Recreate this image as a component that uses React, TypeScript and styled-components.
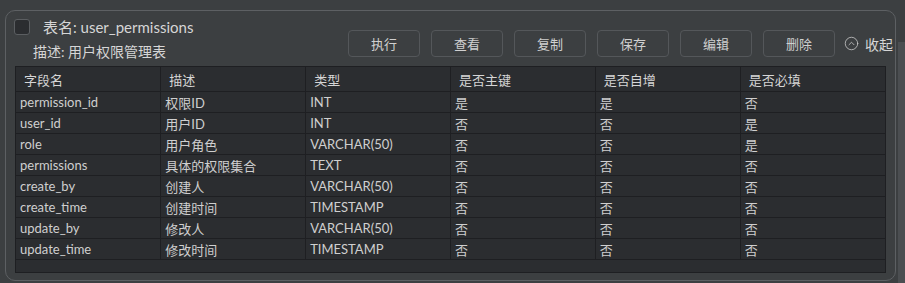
import styled, { createGlobalStyle } from 'styled-components';
import { CircleChevronUp } from 'lucide-react';

const GlobalStyle = createGlobalStyle`
  html, body {
    margin: 0;
    padding: 0;
    background: #3c3f41;
    font-family: Lato, "Noto Sans CJK SC", sans-serif;
    color: #d0d0d0;
  }
`;

type Field = {
  name: string;
  desc: string;
  type: string;
  pk: boolean;
  auto: boolean;
  required: boolean;
};

const FIELDS: Field[] = [
  { name: 'permission_id', desc: '权限ID', type: 'INT', pk: true, auto: true, required: false },
  { name: 'user_id', desc: '用户ID', type: 'INT', pk: false, auto: false, required: true },
  { name: 'role', desc: '用户角色', type: 'VARCHAR(50)', pk: false, auto: false, required: true },
  { name: 'permissions', desc: '具体的权限集合', type: 'TEXT', pk: false, auto: false, required: false },
  { name: 'create_by', desc: '创建人', type: 'VARCHAR(50)', pk: false, auto: false, required: false },
  { name: 'create_time', desc: '创建时间', type: 'TIMESTAMP', pk: false, auto: false, required: false },
  { name: 'update_by', desc: '修改人', type: 'VARCHAR(50)', pk: false, auto: false, required: false },
  { name: 'update_time', desc: '修改时间', type: 'TIMESTAMP', pk: false, auto: false, required: false },
];

const COLUMNS = ['字段名', '描述', '类型', '是否主键', '是否自增', '是否必填'];
const ACTIONS = ['执行', '查看', '复制', '保存', '编辑', '删除'];

const yesNo = (v: boolean) => (v ? '是' : '否');

const App = () => {
  return (
    <>
      <GlobalStyle />
      <Page>
        <Panel>
          <Header>
            <Info>
              <TitleRow>
                <Checkbox />
                <Title>表名: user_permissions</Title>
              </TitleRow>
              <Desc>描述: 用户权限管理表</Desc>
            </Info>
            <Actions>
              {ACTIONS.map((a) => (
                <ActionButton key={a}>{a}</ActionButton>
              ))}
              <Collapse>
                <CircleChevronUp size={15} strokeWidth={1.2} />
                <span>收起</span>
              </Collapse>
            </Actions>
          </Header>

          <TableWrap>
            <Table>
              <colgroup>
                {COLUMNS.map((c) => (
                  <col key={c} style={{ width: `${100 / COLUMNS.length}%` }} />
                ))}
              </colgroup>
              <thead>
                <tr>
                  {COLUMNS.map((c) => (
                    <Th key={c}>{c}</Th>
                  ))}
                </tr>
              </thead>
              <tbody>
                {FIELDS.map((f) => (
                  <tr key={f.name}>
                    <Td>{f.name}</Td>
                    <Td>{f.desc}</Td>
                    <Td>{f.type}</Td>
                    <Td>{yesNo(f.pk)}</Td>
                    <Td>{yesNo(f.auto)}</Td>
                    <Td>{yesNo(f.required)}</Td>
                  </tr>
                ))}
              </tbody>
            </Table>
          </TableWrap>
        </Panel>
        <ScrollTrack />
      </Page>
    </>
  );
};

export default App;

/* ================= STYLES ================= */

const Page = styled.div`
  display: flex;
  align-items: flex-start;
  height: 283px;
  overflow: hidden;
`;

const Panel = styled.div`
  margin: 10px 0 0 5px;
  width: 891px;
  height: 271px;
  box-sizing: border-box;
  border: 1px solid #5d6063;
  border-radius: 10px;
  padding: 0 9px 0 9px;
  display: flex;
  flex-direction: column;
`;

const ScrollTrack = styled.div`
  margin: 42px 0 0 2px;
  width: 7px;
  height: 241px;
  background: #4b4e51;
`;

const Header = styled.div`
  height: 55px;
  display: flex;
  justify-content: space-between;
  align-items: flex-start;
`;

const Info = styled.div`
  display: flex;
  flex-direction: column;
`;

const TitleRow = styled.div`
  display: flex;
  align-items: center;
  gap: 13px;
  margin-top: 8px;
  margin-left: -1px;
  height: 16px;
`;

const Checkbox = styled.span`
  width: 14px;
  height: 14px;
  border: 1px solid #5b5e61;
  border-radius: 3px;
  background: #2b2d30;
`;

const Title = styled.span`
  font-size: 15px;
  line-height: 16px;
  color: #d6d6d6;
`;

const Desc = styled.div`
  margin: 7px 0 0 18px;
  font-size: 14px;
  line-height: 20px;
  color: #d6d6d6;
`;

const Actions = styled.div`
  display: flex;
  align-items: center;
  gap: 11px;
  margin-top: 19px;
  margin-right: -7px;
`;

const ActionButton = styled.button`
  width: 72px;
  height: 27px;
  box-sizing: border-box;
  border: 1px solid #54575a;
  border-radius: 4px;
  background: #3c3f41;
  color: #d0d0d0;
  font-family: inherit;
  font-size: 13px;
  padding: 0;
  cursor: pointer;
`;

const Collapse = styled.div`
  display: flex;
  align-items: center;
  gap: 6px;
  margin-left: -2px;
  font-size: 14px;
  color: #d6d6d6;
  cursor: pointer;

  svg {
    color: #d0d0d0;
  }
`;

const TableWrap = styled.div`
  height: 207px;
  box-sizing: border-box;
  background: #2b2d30;
  border: 1px solid #1e1f22;
  overflow: hidden;
`;

const Table = styled.table`
  width: 100%;
  table-layout: fixed;
  border-collapse: collapse;
  font-size: 13px;
`;

const Th = styled.th`
  height: 24px;
  padding: 0 8px;
  text-align: left;
  font-weight: normal;
  color: #d6d6d6;
  border-left: 1px solid #1e1f22;
  border-bottom: 1px solid #1e1f22;

  &:first-child {
    border-left: none;
  }
`;

const Td = styled.td`
  height: 20px;
  padding: 0 4px;
  color: #cfcfcf;
  white-space: nowrap;
  border-left: 1px solid #1e1f22;
  border-bottom: 1px solid #1e1f22;

  &:first-child {
    border-left: none;
  }
`;
